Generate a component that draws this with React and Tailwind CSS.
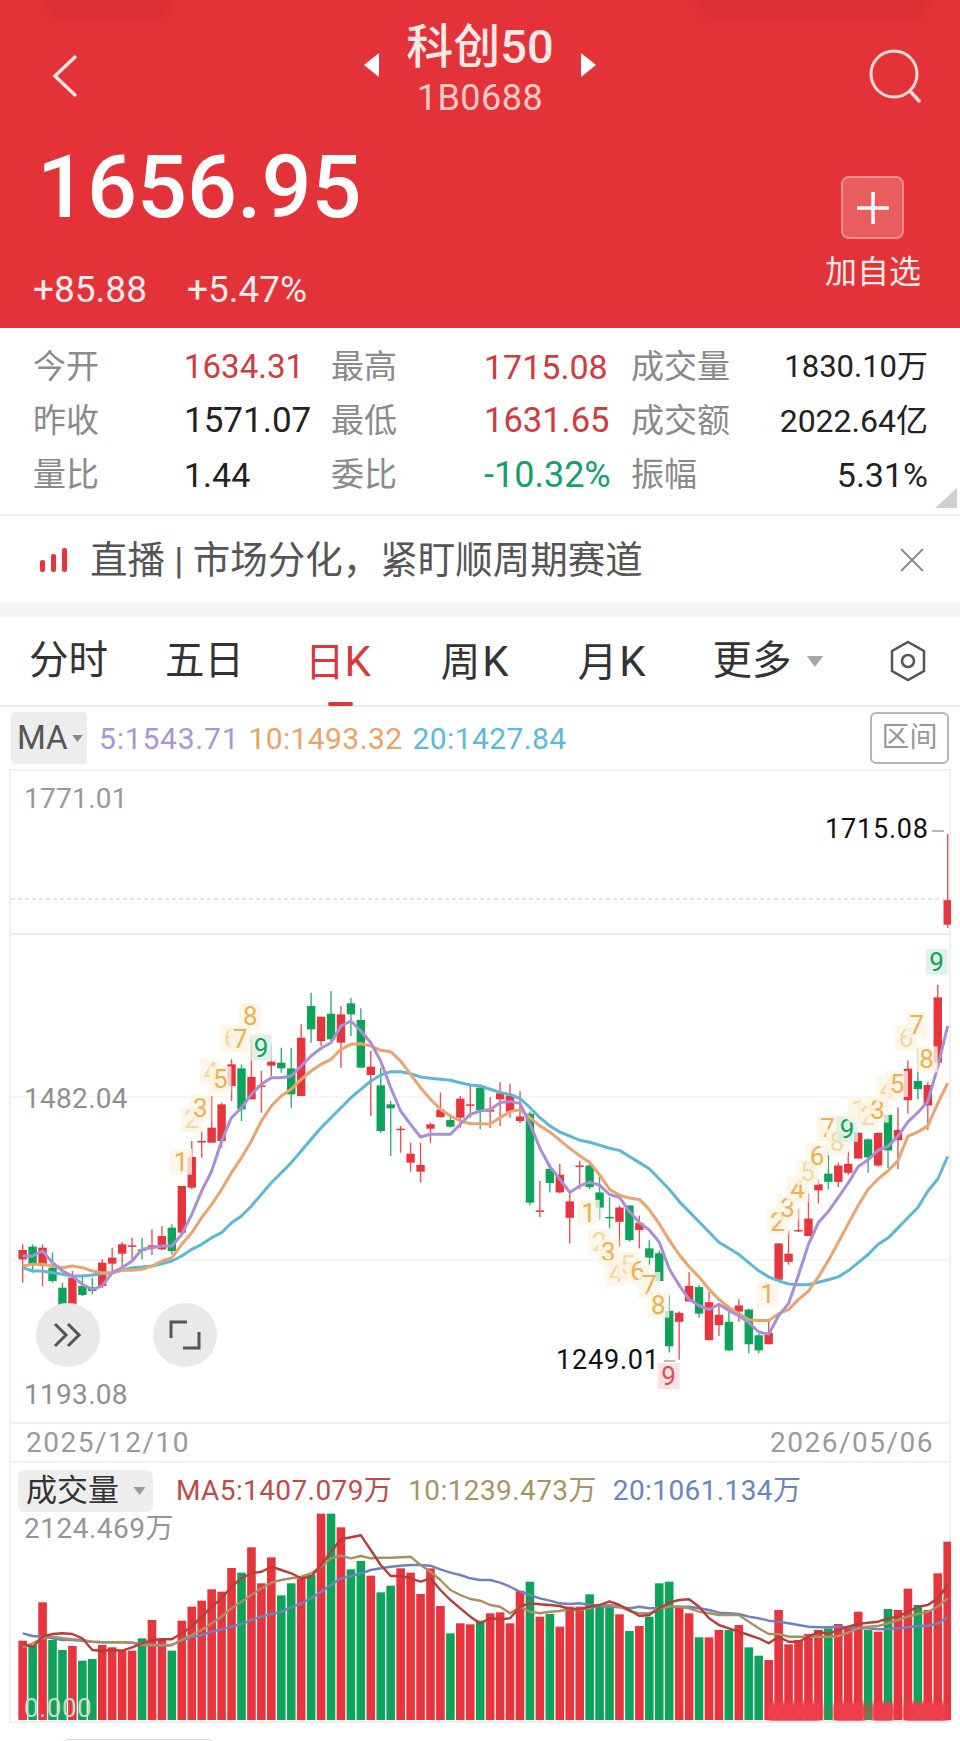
import React from "react";

const R = "#e8343c";
const G = "#0ea35a";

const c1 = [
  [880,897,925,995,"r"],[880,887,940,965,"g"],[880,890,945,1005,"r"],[905,950,990,995,"g"],[995,1010,1075,1100,"g"],
  [960,980,1070,1090,"r"],[975,1005,1032,1035,"g"],[980,1008,1020,1030,"g"],[925,935,1005,1010,"r"],[890,920,938,960,"r"],
  [873,880,908,960,"r"],[860,883,885,925,"r"],[860,895,897,925,"g"],[835,883,885,912,"r"],[825,855,895,897,"r"],
  [820,830,900,910,"g"],[705,705,845,850,"r"],[570,618,710,715,"r"],[540,570,572,620,"r"],[435,530,575,575,"r"],
  [455,460,570,590,"r"],[325,340,405,450,"r"],[340,352,475,510,"g"],[265,378,445,445,"r"],[360,403,405,485,"r"],
  [280,332,344,375,"r"],[290,335,352,365,"g"],[290,352,430,470,"g"],[220,260,435,435,"r"],[125,165,235,275,"g"],
  [197,197,270,285,"r"],[120,188,265,270,"g"],[165,190,275,350,"r"],[140,157,190,255,"g"],[172,207,350,350,"g"],
  [300,347,372,495,"r"],[350,403,540,545,"g"],[450,460,472,615,"g"],[525,533,535,605,"r"],[575,608,635,662,"r"],
  [575,642,662,695,"r"],[515,520,533,575,"r"],[425,476,498,500,"r"],[490,507,527,530,"g"],[435,443,500,530,"r"],
  [405,460,462,500,"r"],[400,410,478,535,"g"],
];
const c2 = [
  [775,805,810,850,"r"],[738,765,780,845,"r"],[742,770,810,825,"r"],[760,822,833,838,"r"],[810,815,1033,1040,"g"],
  [980,1052,1055,1068,"r"],[938,950,985,1008,"g"],[938,965,1008,1010,"r"],[1005,1030,1070,1133,"r"],[930,942,945,1000,"r"],
  [930,942,995,1000,"g"],[965,1008,1045,1075,"g"],[1020,1068,1070,1095,"g"],[1040,1045,1080,1140,"r"],[1040,1040,1125,1128,"g"],
  [1065,1083,1100,1145,"r"],[1125,1145,1168,1185,"g"],[1150,1157,1225,1228,"g"],[1260,1298,1385,1400,"g"],[1300,1303,1325,1418,"r"],
  [1203,1237,1275,1275,"r"],[1235,1240,1305,1315,"g"],[1252,1277,1370,1370,"r"],[1285,1308,1333,1360,"r"],[1288,1325,1395,1397,"g"],
  [1270,1285,1300,1325,"r"],[1293,1295,1380,1402,"g"],[1355,1358,1395,1402,"g"],[1320,1352,1380,1380,"r"],[1133,1133,1222,1228,"r"],
  [1102,1158,1178,1185,"r"],[1048,1100,1102,1105,"r"],[1010,1072,1115,1115,"r"],[975,988,1003,1035,"r"],[908,962,982,1000,"g"],
  [935,942,982,995,"r"],[908,938,960,965,"r"],[860,862,925,925,"r"],[875,878,922,960,"g"],[862,862,942,945,"r"],
  [818,818,905,948,"g"],[800,855,880,952,"r"],[685,705,782,815,"r"],[655,735,755,780,"g"],[738,745,795,855,"r"],
  [500,530,690,690,"r"],[130,292,352,360,"r"],
];

const ma5 = [[915,915,900,935,960,975,1000,1015,1005,965,950,930,895,890,885,885,850,790,720,660,570,500,470,430,400,380,380,375,345,315,292,275,225,210,240,275,330,410,480,520,558,550,550,550,520,490,480],
  [805,788,785,790,840,900,945,975,1008,992,983,990,1013,1020,1055,1082,1100,1130,1195,1235,1270,1285,1295,1282,1297,1310,1327,1350,1355,1310,1280,1210,1135,1082,1055,1020,985,945,928,905,895,870,835,812,785,700,600]];
const ma10 = [[945,940,940,945,950,945,950,960,965,965,958,958,955,945,930,920,880,845,800,760,715,665,620,570,510,465,435,415,385,360,340,325,295,280,278,285,298,302,330,370,410,445,475,495,510,518,518],
  [840,825,810,805,825,845,860,880,900,918,935,965,1000,1015,1022,1025,1050,1085,1125,1160,1190,1215,1245,1270,1290,1305,1320,1322,1322,1305,1295,1270,1250,1215,1175,1130,1085,1040,1000,975,955,930,870,860,845,790,740]];
const ma20 = [[950,960,960,965,970,975,975,972,968,965,958,950,948,945,938,930,915,895,880,860,845,815,795,765,730,695,665,635,600,565,530,500,470,440,415,390,372,362,362,368,378,382,385,388,395,402,405],
  [755,763,768,778,800,825,845,860,870,880,885,892,900,905,920,935,950,975,1000,1030,1055,1080,1105,1130,1145,1160,1180,1200,1215,1225,1232,1234,1234,1228,1222,1215,1200,1180,1160,1135,1120,1095,1070,1045,1005,975,920]];

const vol = [
  [692,"r"],[705,"g"],[577,"r"],[690,"g"],[720,"g"],[708,"r"],[752,"g"],[747,"g"],[705,"r"],[712,"r"],
  [722,"r"],[722,"r"],[685,"g"],[630,"r"],[690,"r"],[722,"g"],[632,"r"],[590,"r"],[572,"r"],[538,"r"],
  [545,"r"],[474,"r"],[488,"g"],[412,"r"],[520,"r"],[442,"r"],[556,"g"],[520,"g"],[505,"r"],[495,"g"],
  [311,"r"],[311,"g"],[352,"r"],[478,"g"],[453,"g"],[497,"r"],[547,"g"],[527,"g"],[475,"r"],[488,"r"],
  [552,"r"],[475,"r"],[588,"r"],[670,"g"],[640,"r"],[643,"r"],[632,"g"],
  [610,"r"],[607,"r"],[640,"r"],[542,"r"],[515,"g"],[620,"r"],[612,"g"],[650,"r"],[590,"r"],[590,"r"],
  [553,"g"],[585,"g"],[585,"g"],[613,"r"],[663,"g"],[648,"r"],[620,"g"],[520,"g"],[515,"g"],[590,"r"],
  [610,"r"],[682,"g"],[682,"r"],[660,"r"],[660,"g"],[645,"r"],[712,"g"],[737,"g"],[750,"r"],[600,"r"],
  [703,"r"],[690,"r"],[672,"r"],[660,"r"],[655,"g"],[642,"r"],[650,"r"],[605,"r"],[660,"g"],[665,"r"],
  [597,"g"],[600,"r"],[536,"r"],[585,"g"],[600,"r"],[490,"r"],[395,"r"],
];
const vma5 = [700,712,680,672,670,672,685,720,722,720,722,712,700,690,688,688,670,650,620,590,565,530,505,490,485,470,480,490,505,500,465,425,388,382,376,420,465,498,498,505,515,505,540,570,595,620,640,
  625,628,625,590,580,583,585,588,597,598,590,585,574,585,600,618,615,595,578,570,568,590,625,645,655,665,675,685,700,680,695,695,680,665,672,660,650,642,638,635,625,620,605,590,585,565,525];
const vma10 = [712,700,685,680,685,688,690,695,697,697,697,698,705,705,705,705,690,675,660,640,620,595,575,555,535,518,510,505,500,490,470,445,437,445,438,445,443,443,442,440,465,485,510,540,555,567,572,
  585,590,610,590,605,610,605,603,597,600,595,585,585,590,603,610,610,595,590,590,595,605,610,615,615,615,635,655,672,672,680,680,680,680,680,678,668,655,650,648,640,630,620,612,605,590,565];
const vma20 = [670,678,680,685,690,690,692,695,697,697,697,698,702,705,708,705,690,682,675,665,658,650,642,630,620,612,605,592,580,565,545,525,505,498,490,480,475,470,467,465,465,467,478,488,495,505,510,
  510,518,530,545,555,565,572,580,582,580,585,588,590,592,595,590,595,595,590,590,590,595,600,608,610,612,620,625,632,635,640,645,650,652,652,650,652,655,655,658,657,655,652,648,648,640,622];

const X = (i) => (65 + 29.84 * i) / 3;
const Ya = (y) => 180 + y / 3;
const Yb = (y) => 10 + 0.40816 * y;
const Yv = (y) => y / 3 - 102;

const td1 = [
  ["1",540,632,0],["2",572,505,1],["3",598,470,0],["4",630,362,1],["5",658,385,0],["6",690,260,1],["7",718,265,0],["8",748,195,0],["9",780,290,2],
];
const td2 = [
  ["1",323,1058,0],["2",355,1130,1],["3",382,1155,0],["4",405,1205,1],["5",440,1185,1],["6",470,1200,0],["7",505,1235,0],["8",532,1283,0],["9",563,1458,3],
  ["1",860,1258,0],["2",890,1080,0],["3",920,1045,0],["4",950,1000,0],["5",980,958,1],["6",1008,918,0],["7",1040,850,0],["8",1068,885,1],["9",1098,852,2],
  ["1",1132,805,1],["2",1160,820,1],["3",1190,805,0],["4",1218,755,1],["5",1248,742,0],["6",1275,630,1],["7",1307,598,0],["8",1337,682,0],["9",1367,443,2],
];

function Td({ t, x, y, k }) {
  const bg = k === 2 ? "#d9efe4" : k === 3 ? "#fbd9dd" : "#fdf4e6";
  const fg = k === 2 ? G : k === 3 ? "#d8505a" : k === 1 ? "#f3d7a4" : "#eeb04e";
  return (
    <g>
      <rect x={x - 11} y={y - 13} width={22} height={26} fill={bg} opacity={0.8} />
      <text x={x} y={y + 9} textAnchor="middle" fontSize="26" fill={fg} fontFamily="Roboto, sans-serif">{t}</text>
    </g>
  );
}

function PriceChart() {
  const candles = [...c1.map((c) => ({ c, f: Ya })), ...c2.map((c) => ({ c, f: Yb }))];
  const line = (m) => [...m[0].map(Ya), ...m[1].map(Yb)].map((y, i) => `${X(i).toFixed(1)},${y.toFixed(1)}`).join(" ");
  return (
    <svg className="block" width="940" height="651" viewBox="10 0 940 651">
      <line x1="10" x2="950" y1="163" y2="163" stroke="#e6e6e6" strokeWidth="1.5" />
      <line x1="10" x2="950" y1="128" y2="128" stroke="#d9c9a8" strokeWidth="1" strokeDasharray="4 3" />
      <line x1="10" x2="950" y1="326" y2="326" stroke="#ececec" />
      <line x1="10" x2="950" y1="489" y2="489" stroke="#ececec" />
      {candles.map(({ c, f }, i) => {
        const col = c[4] === "r" ? R : G;
        const x = X(i);
        const top = f(c[1]);
        const h = Math.max(f(c[2]) - top, 1.5);
        return (
          <g key={i}>
            <line x1={x} x2={x} y1={f(c[0])} y2={f(c[3])} stroke={col} strokeWidth="1.4" opacity="0.85" />
            <rect x={x - 4.2} y={top} width="8.4" height={h} fill={col} />
          </g>
        );
      })}
      <polyline points={line(ma20)} fill="none" stroke="#5db7d6" strokeWidth="3" strokeLinejoin="round" />
      <polyline points={line(ma10)} fill="none" stroke="#eba46c" strokeWidth="3" strokeLinejoin="round" />
      <polyline points={line(ma5)} fill="none" stroke="#a98fd6" strokeWidth="3" strokeLinejoin="round" />
      {td1.map(([t, x, y, k], i) => <Td key={i} t={t} x={x / 3} y={Ya(y)} k={k} />)}
      {td2.map(([t, x, y, k], i) => <Td key={i} t={t} x={480 + x / 3} y={Yb(y)} k={k} />)}
      <line x1="931" x2="943" y1="60" y2="60" stroke="#777" />
      <line x1="663" x2="674" y1="590" y2="590" stroke="#777" />
    </svg>
  );
}

function VolumeChart() {
  const line = (m) => m.map((y, i) => `${X(i).toFixed(1)},${Yv(y).toFixed(1)}`).join(" ");
  return (
    <svg className="block" width="940" height="209" viewBox="10 0 940 209">
      <defs>
        <filter id="smear"><feGaussianBlur stdDeviation="2" /></filter>
      </defs>
      {vol.map(([y, c], i) => (
        <rect key={i} x={X(i) - 4.3} y={Yv(y)} width="8.6" height={208 - Yv(y)} fill={c === "r" ? R : G} />
      ))}
      <g filter="url(#smear)">
        <rect x="766" y="190" width="56" height="20" rx="6" fill="#ee3d4b" />
        <rect x="832" y="190" width="34" height="20" rx="6" fill="#ee3d4b" />
        <rect x="870" y="190" width="24" height="20" rx="6" fill="#ee3d4b" />
        <rect x="902" y="190" width="46" height="20" rx="6" fill="#ee3d4b" />
      </g>
      <polyline points={line(vma20)} fill="none" stroke="#6e83bd" strokeWidth="2.4" strokeLinejoin="round" />
      <polyline points={line(vma10)} fill="none" stroke="#a89160" strokeWidth="2.4" strokeLinejoin="round" />
      <polyline points={line(vma5)} fill="none" stroke="#b93c3a" strokeWidth="2.4" strokeLinejoin="round" />
    </svg>
  );
}

const stats = [
  ["今开", "1634.31", "text-[33px] text-[#d3393f]", "最高", "1715.08", "text-[34px] text-[#d3393f]", "成交量", "1830.10万", "text-[31px]"],
  ["昨收", "1571.07", "text-[35px] text-[#222]", "最低", "1631.65", "text-[34.5px] text-[#d3393f]", "成交额", "2022.64亿", "text-[32px]"],
  ["量比", "1.44", "text-[34px] text-[#222]", "委比", "-10.32%", "text-[36px] text-[#13a06b]", "振幅", "5.31%", "text-[34px]"],
];

function Caret({ className }) {
  return (
    <svg className={className} viewBox="0 0 12 8">
      <path d="M0 0H12L6 8Z" fill="currentColor" />
    </svg>
  );
}

export default function App() {
  return (
    <div className="w-[960px] h-[1741px] overflow-hidden bg-white font-['Roboto','Noto_Sans_CJK_SC',sans-serif]">
      {/* Red header */}
      <header className="relative h-[328px] overflow-hidden bg-[#e33338] text-white">
        <div className="absolute left-[45px] top-[-10px] h-[30px] w-[125px] rounded-b-[20px] bg-[#da2f34] blur-[4px]" />
        <div className="absolute left-[698px] top-[-10px] h-[30px] w-[230px] rounded-b-[20px] bg-[#da2f34] blur-[4px]" />
        <div className="relative flex h-[142px] items-start justify-between pl-[50px] pr-[36px]">
          <svg className="mt-[53px]" width="30" height="46" viewBox="0 0 30 46">
            <path d="M26 3L5 23L26 43" fill="none" stroke="#fbe4e4" strokeWidth="3.5" />
          </svg>
          <div className="ml-[12px] flex flex-col items-center pt-[16px]">
            <div className="flex items-center gap-[25px]">
              <svg className="mt-[36px]" width="18" height="24" viewBox="0 0 18 24"><path d="M16 0V24L1 12Z" fill="#fff" /></svg>
              <span className="text-[47px] font-medium leading-[62px] text-[#fde8e8]">科创50</span>
              <svg className="mt-[36px]" width="18" height="24" viewBox="0 0 18 24"><path d="M2 0V24L17 12Z" fill="#fff" /></svg>
            </div>
            <span className="mt-[2px] text-[36px] leading-[36px] tracking-[0.5px] text-[#f9c9c9]">1B0688</span>
          </div>
          <svg className="mt-[48px]" width="56" height="56" viewBox="0 0 56 56">
            <circle cx="26" cy="26" r="23" fill="none" stroke="#fbdada" strokeWidth="3" />
            <path d="M42 43L52 54" stroke="#fbdada" strokeWidth="3.5" />
          </svg>
        </div>
        <div className="relative flex items-start justify-between pl-[37px] pr-[39px]">
          <div className="flex flex-col">
            <span className="text-[88px] font-medium leading-[90px]">1656.95</span>
            <div className="mt-[38px] flex gap-[40px] text-[37px] leading-[40px] text-[#fdeaea]">
              <span className="-ml-[4px]">+85.88</span>
              <span>+5.47%</span>
            </div>
          </div>
          <div className="flex flex-col items-center pt-[34px]">
            <div className="flex h-[63px] w-[63px] items-center justify-center rounded-[8px] border-2 border-[#f08f8f] bg-[#ea5d5f]">
              <svg width="32" height="32" viewBox="0 0 32 32"><path d="M16 0V32M0 16H32" stroke="#fff" strokeWidth="3.5" /></svg>
            </div>
            <span className="mt-[16px] text-[32px] leading-[34px] text-[#fdeaea]">加自选</span>
          </div>
        </div>
      </header>

      {/* Stats */}
      <section className="relative h-[188px] border-b-2 border-[#efefef] pl-[33px] pt-[12px]">
        {stats.map((r) => (
          <div key={r[0]} className="grid h-[54px] grid-cols-[151px_147px_153px_147px_297px] items-center text-[33px]">
            <span className="text-[#8a8a8a]">{r[0]}</span>
            <span className={r[2]}>{r[1]}</span>
            <span className="text-[#8a8a8a]">{r[3]}</span>
            <span className={r[5]}>{r[4]}</span>
            <span className="flex items-center justify-between">
              <span className="text-[#8a8a8a]">{r[6]}</span>
              <span className={`${r[8]} text-[#222]`}>{r[7]}</span>
            </span>
          </div>
        ))}
        <svg className="absolute bottom-[6px] right-[3px]" width="22" height="20" viewBox="0 0 22 20"><path d="M22 0V20H0Z" fill="#cfcfcf" /></svg>
      </section>

      {/* Notice */}
      <section className="flex h-[87px] items-center bg-white pl-[40px] pr-[35px]">
        <svg width="28" height="24" viewBox="0 0 28 24">
          <rect x="0" y="12" width="5" height="12" rx="2" fill={R} />
          <rect x="11" y="6" width="5" height="18" rx="2" fill={R} />
          <rect x="22" y="0" width="5" height="24" rx="2" fill={R} />
        </svg>
        <span className="ml-[22px] text-[37.5px] leading-[40px] text-[#555]">直播 | 市场分化，紧盯顺周期赛道</span>
        <svg className="ml-auto" width="26" height="24" viewBox="0 0 26 24"><path d="M2 1L24 23M24 1L2 23" stroke="#8c8c8c" strokeWidth="2" /></svg>
      </section>
      <div className="h-[14px] bg-[#f5f5f5]" />

      {/* Tabs */}
      <nav className="relative flex h-[90px] items-center border-b-2 border-[#ececec] text-[39.5px] text-[#333]">
        <span className="ml-[29px]">分时</span>
        <span className="ml-[57px]">五日</span>
        <span className="ml-[61px] text-[#d9363e]">日<span className="text-[42px]">K</span></span>
        <span className="ml-[70px]">周<span className="ml-[2px] text-[42px]">K</span></span>
        <span className="ml-[69px]">月<span className="ml-[2px] text-[42px]">K</span></span>
        <span className="ml-[67px]">更多</span>
        <Caret className="ml-[14px] h-[11px] w-[18px] text-[#a8a8a8]" />
        <svg className="ml-[65px]" width="38" height="42" viewBox="0 0 38 42">
          <path d="M19 2L35 11V31L19 40L3 31V11Z" fill="none" stroke="#555" strokeWidth="2.5" />
          <circle cx="19" cy="21" r="6" fill="none" stroke="#555" strokeWidth="2.5" />
        </svg>
        <div className="absolute bottom-[-1px] left-[328px] h-[4px] w-[25px] rounded-full bg-[#d9363e]" />
      </nav>

      {/* MA row */}
      <div className="flex h-[62px] items-center pl-[11px] pr-[11px] text-[30px]">
        <div className="flex h-[52px] w-[76px] items-center rounded-[4px] bg-[#ededed] pl-[6px] text-[#555]">
          <span className="text-[33px]">MA</span>
          <Caret className="ml-[4px] h-[7px] w-[11px] text-[#888]" />
        </div>
        <span className="ml-[12px] text-[30px] tracking-[0.8px] text-[#a796d8]">5:1543.71</span>
        <span className="ml-[9px] text-[30px] tracking-[0.4px] text-[#eca265]">10:1493.32</span>
        <span className="ml-[10px] text-[30px] tracking-[0.4px] text-[#5db8d9]">20:1427.84</span>
        <div className="ml-auto flex h-[52px] w-[79px] items-center justify-center rounded-[6px] border-2 border-[#b5b5b5] text-[28px] text-[#999]">区间</div>
      </div>

      {/* Price chart */}
      <section className="relative mx-[9px] w-[942px] border-x-2 border-t-2 border-[#efefef]">
        <PriceChart />
        <span className="absolute left-[13px] top-[12px] text-[28px] leading-[32px] tracking-[0.3px] text-[#999]">1771.01</span>
        <span className="absolute left-[13px] top-[312px] text-[28px] leading-[32px] tracking-[0.3px] text-[#8f8f8f]">1482.04</span>
        <span className="absolute left-[13px] top-[608px] text-[28px] leading-[32px] tracking-[0.3px] text-[#8f8f8f]">1193.08</span>
        <span className="absolute left-[814px] top-[42px] text-[27px] leading-[32px] tracking-[0.8px] text-[#111]">1715.08</span>
        <span className="absolute left-[545px] top-[573px] text-[27px] leading-[32px] tracking-[0.8px] text-[#111]">1249.01</span>
        <button className="absolute left-[25px] top-[532px] flex h-[64px] w-[64px] items-center justify-center rounded-full bg-[#e9e9e9]">
          <svg width="30" height="26" viewBox="0 0 30 26"><path d="M2 2L13 13L2 24M15 2L26 13L15 24" fill="none" stroke="#555" strokeWidth="3" /></svg>
        </button>
        <button className="absolute left-[142px] top-[532px] flex h-[64px] w-[64px] items-center justify-center rounded-full bg-[#e9e9e9]">
          <svg width="32" height="30" viewBox="0 0 32 30"><path d="M18 2H2V18M14 28H30V12" fill="none" stroke="#555" strokeWidth="3" /></svg>
        </button>
      </section>

      {/* Dates */}
      <div className="mx-[9px] flex h-[41px] w-[942px] items-center justify-between border-x-2 border-y-2 border-[#efefef] pl-[15px] pr-[15px] text-[28px] tracking-[1.5px] text-[#9a9a9a]">
        <span>2025/12/10</span>
        <span>2026/05/06</span>
      </div>

      {/* Volume */}
      <section className="relative mx-[9px] w-[942px] border-x-2 border-b-2 border-[#efefef]">
        <div className="flex h-[49px] items-end pl-[7px] text-[28px] tracking-[0.4px]">
          <div className="flex h-[42px] w-[135px] items-center rounded-[6px] bg-[#eeeeee] pl-[8px] text-[31px] tracking-normal text-[#333]">
            成交量
            <Caret className="ml-[14px] h-[8px] w-[13px] text-[#999]" />
          </div>
          <div className="flex text-[28px]">
            <span className="ml-[23px] text-[#c04a4a]">MA5:1407.079万</span>
            <span className="ml-[16px] text-[#a79363]">10:1239.473万</span>
            <span className="ml-[16px] text-[#6a85bd]">20:1061.134万</span>
          </div>
        </div>
        <VolumeChart />
        <span className="absolute left-[13px] top-[50px] text-[28px] leading-[32px] tracking-[0.5px] text-[#959595]">2124.469万</span>
        <span className="absolute left-[13px] top-[230px] text-[26px] leading-[30px] tracking-[0.6px] text-[#c7dbcf]">0.000</span>
      </section>
      <div className="ml-[62px] mt-[16px] h-[6px] w-[152px] rounded-t-[10px] border-x border-t border-[#dddddd]" />
    </div>
  );
}
